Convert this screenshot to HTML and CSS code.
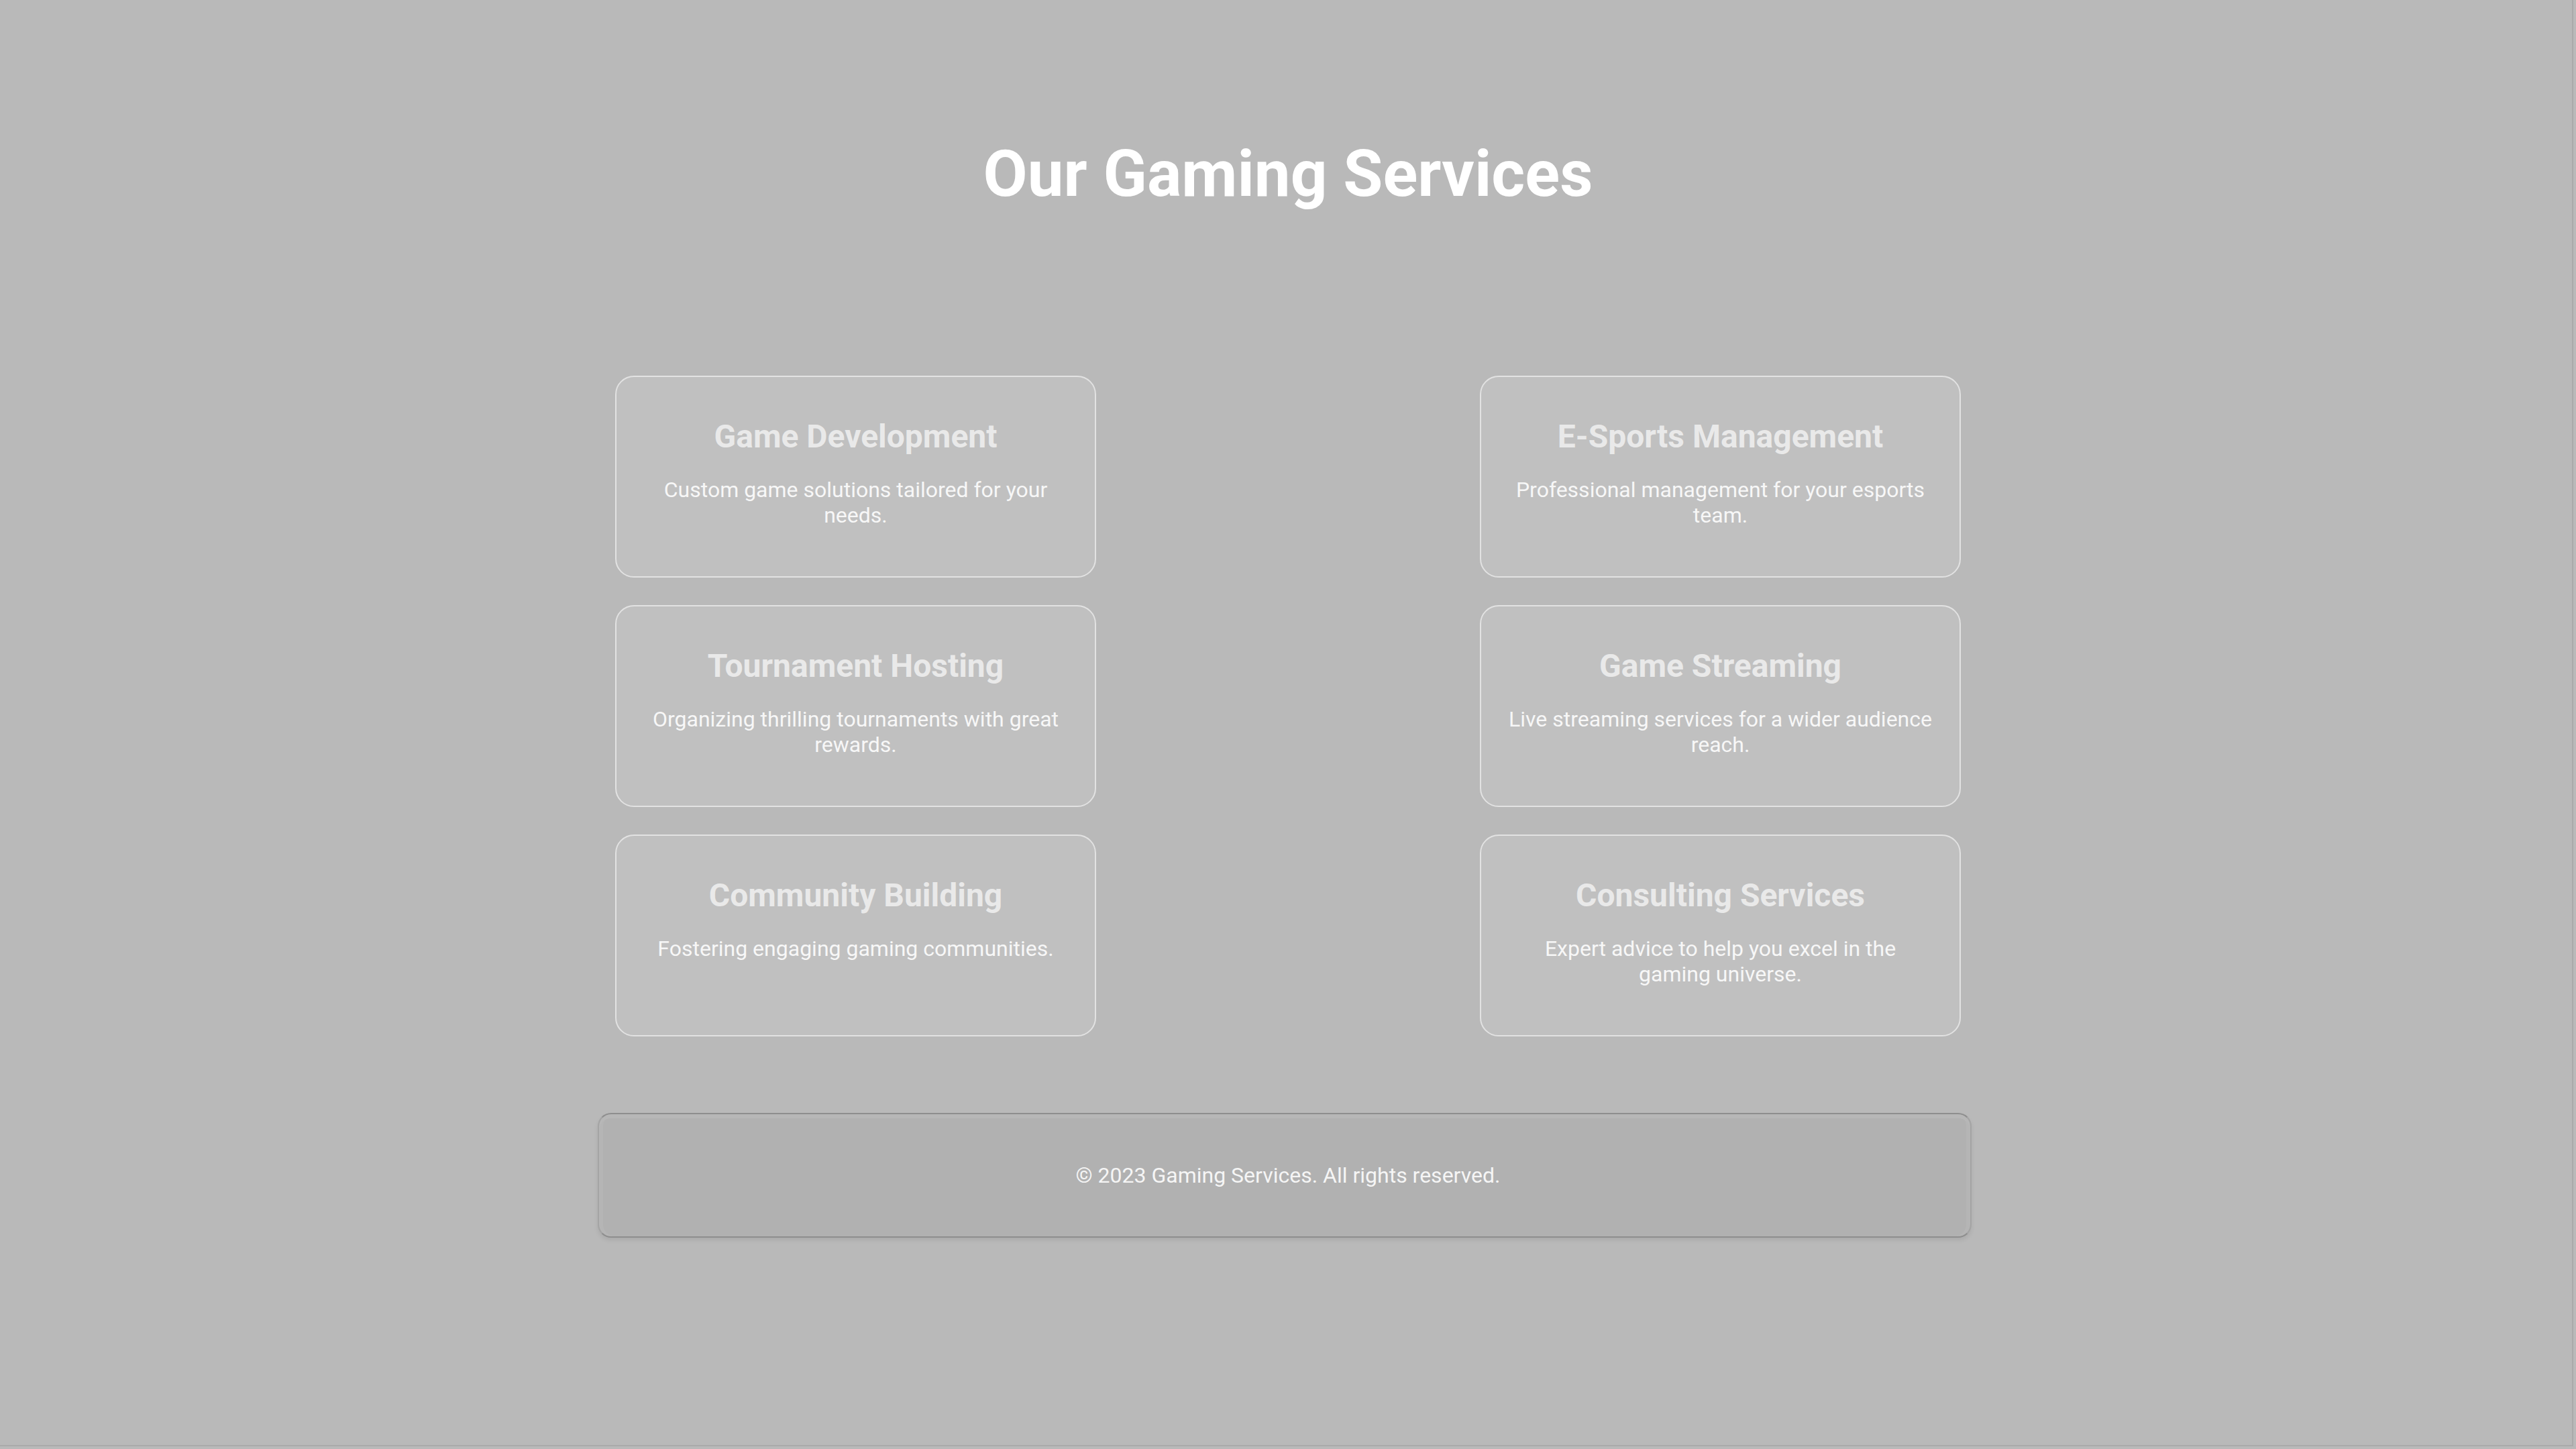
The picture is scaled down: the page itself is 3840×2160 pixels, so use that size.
FILE: index.html
```html
<!DOCTYPE html>
<html lang="en">
<head>
<meta charset="utf-8">
<title>Our Gaming Services</title>
<link rel="stylesheet" href="styles.css">
</head>
<body>
<div class="page">
  <header class="hero">
    <h1 class="hero-title">Our Gaming Services</h1>
  </header>
  <main class="container">
    <section class="services">
      <div class="card">
        <h3 class="card-title">Game Development</h3>
        <p class="card-text">Custom game solutions tailored for your needs.</p>
      </div>
      <div class="card">
        <h3 class="card-title">E-Sports Management</h3>
        <p class="card-text">Professional management for your esports team.</p>
      </div>
      <div class="card">
        <h3 class="card-title">Tournament Hosting</h3>
        <p class="card-text">Organizing thrilling tournaments with great rewards.</p>
      </div>
      <div class="card">
        <h3 class="card-title">Game Streaming</h3>
        <p class="card-text">Live streaming services for a wider audience reach.</p>
      </div>
      <div class="card">
        <h3 class="card-title">Community Building</h3>
        <p class="card-text">Fostering engaging gaming communities.</p>
      </div>
      <div class="card">
        <h3 class="card-title">Consulting Services</h3>
        <p class="card-text">Expert advice to help you excel in the gaming universe.</p>
      </div>
    </section>
    <footer class="footer">
      <p class="footer-text">© 2023 Gaming Services. All rights reserved.</p>
    </footer>
  </main>
</div>
</body>
</html>
```
FILE: styles.css
```css
html, body {
  margin: 0;
  padding: 0;
  background: #b9b9b9;
}

body {
  font-family: Roboto, "Noto Sans", "Liberation Sans", sans-serif;
  color: #ffffff;
}

.page {
  box-sizing: border-box;
  width: 3840px;
  height: 2160px;
  overflow: hidden;
  box-shadow: inset -4px -4px 0 #b9b9b9, inset -6px -6px 0 #aaaaaa;
}

.hero {
  padding-top: 203px;
  text-align: center;
}

.hero-title {
  margin: 0;
  font-size: 96px;
  font-weight: 700;
  line-height: normal;
  color: #ffffff;
}

.container {
  width: 2048px;
  margin: 245px auto 0;
}

.services {
  display: grid;
  grid-template-columns: 717px 717px;
  justify-content: space-between;
  row-gap: 41px;
  padding: 0 21px;
}

.card {
  box-sizing: border-box;
  background: #c0c0c0;
  border: 2px solid #e2e2e2;
  border-radius: 28px;
  padding: 40px;
  text-align: center;
}

.card-title {
  margin: 20px 0 0;
  font-size: 48px;
  font-weight: 700;
  line-height: normal;
  color: #e9e9e9;
}

.card-text {
  margin: 32px 0;
  font-size: 32px;
  font-weight: 400;
  line-height: normal;
  color: #f7f7f7;
}

.footer {
  margin-top: 114px;
  margin-left: -5px;
  margin-right: 5px;
  background: #b1b1b1;
  border: 2px solid #a4a4a4;
  border-top-color: #8e8e8e;
  border-bottom-color: #8e8e8e;
  border-radius: 20px;
  padding: 40px 35px 40px 45px;
  text-align: center;
  box-shadow: inset 0 6px 0 #b7b7b7, inset 6px 0 0 #b5b5b5, inset -6px 0 0 #b5b5b5, 0 4px 6px rgba(0, 0, 0, 0.08);
}

.footer-text {
  margin: 32px 0;
  font-size: 32px;
  line-height: normal;
  color: #f5f5f5;
}
```
